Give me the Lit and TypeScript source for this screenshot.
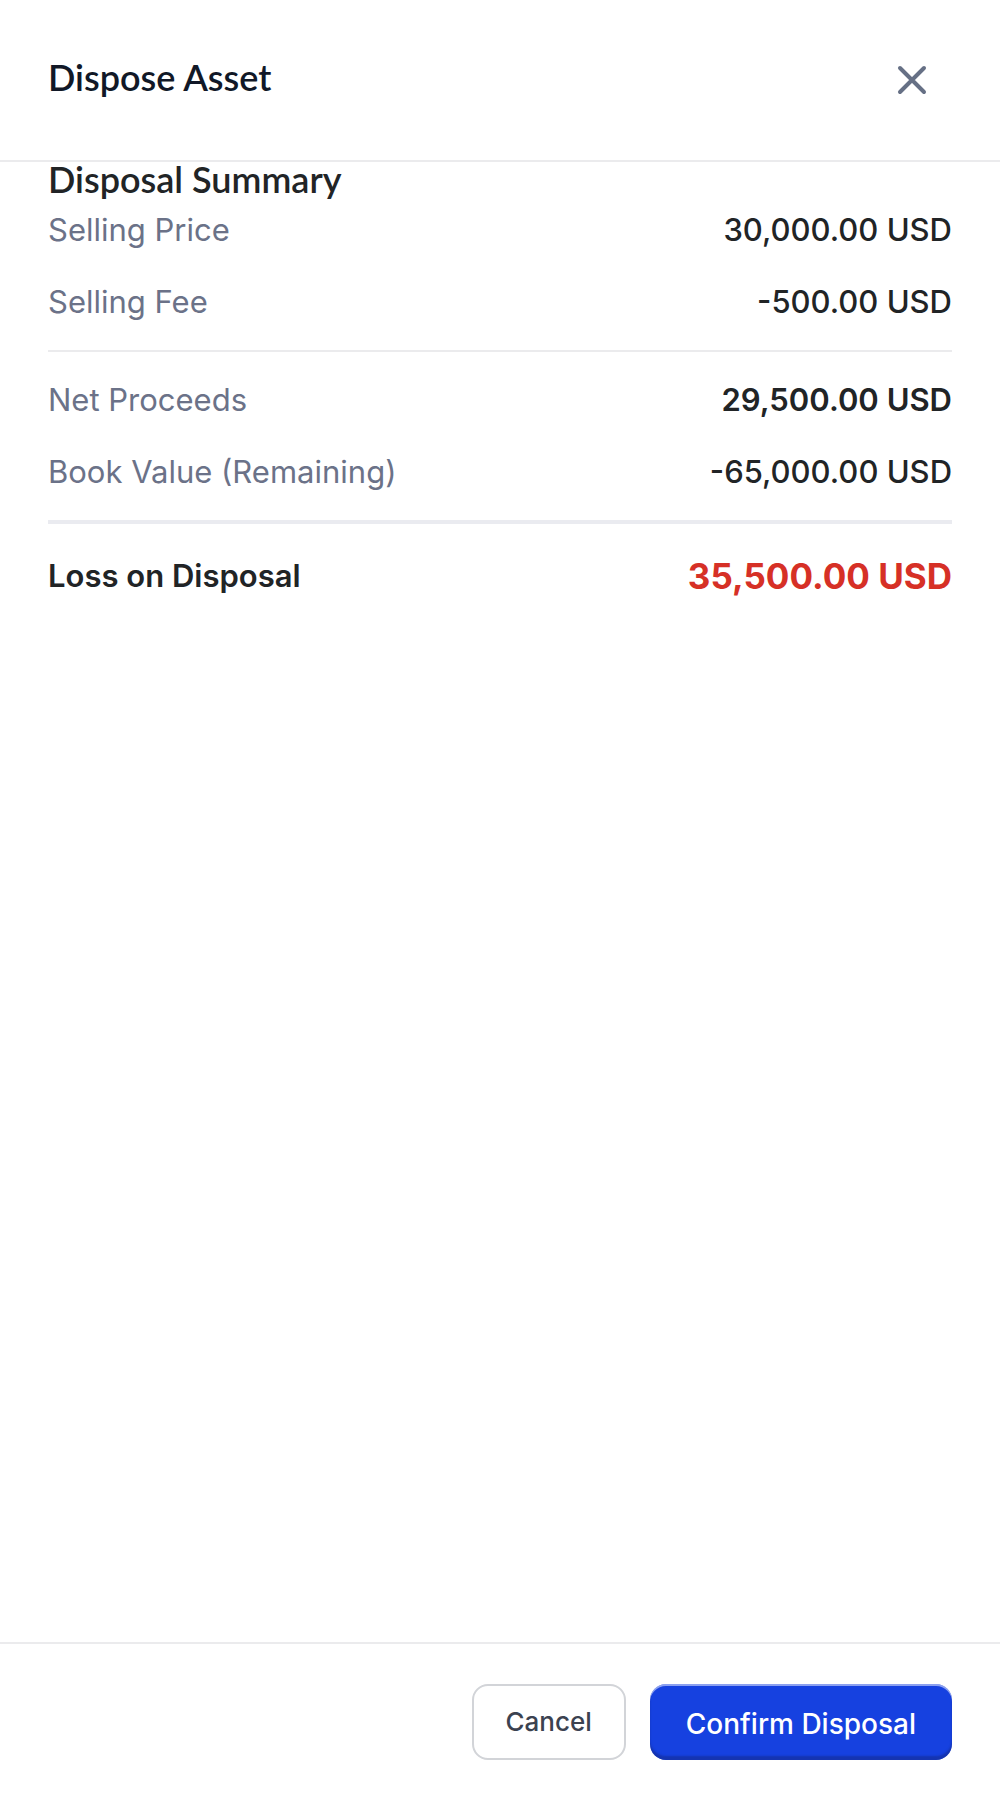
import { LitElement, html, css } from 'lit';
import { customElement, property } from 'lit/decorators.js';

@customElement('summary-row')
export class SummaryRow extends LitElement {
  @property({ type: String }) label = '';
  @property({ type: String }) amount = '';
  // '' | 'strong' | 'total'
  @property({ type: String }) variant = '';

  static styles = css`
    :host {
      display: block;
    }
    .row {
      display: flex;
      align-items: center;
      justify-content: space-between;
      gap: 16px;
      font-size: 31px;
      line-height: 48px;
    }
    .label {
      color: #6b7288;
    }
    .amount {
      font-weight: 500;
      color: #212426;
      white-space: nowrap;
    }
    .strong .amount {
      font-weight: 600;
    }
    .total {
      line-height: 56px;
    }
    .total .label {
      font-weight: 600;
      color: #212426;
    }
    .total .amount {
      font-size: 35px;
      font-weight: 700;
      color: #d63026;
    }
  `;

  render() {
    return html`
      <div class="row ${this.variant}">
        <span class="label">${this.label}</span>
        <span class="amount">${this.amount}</span>
      </div>
    `;
  }
}

@customElement('app-root')
export class AppRoot extends LitElement {
  static styles = css`
    :host {
      display: flex;
      flex-direction: column;
      min-height: 100vh;
      background: #ffffff;
      font-family: Inter, 'Liberation Sans', sans-serif;
    }
    .header {
      display: flex;
      align-items: flex-start;
      justify-content: space-between;
      padding: 48px;
      border-bottom: 2px solid #ebebed;
    }
    h1,
    h2 {
      margin: 0;
      font-family: Lato, sans-serif;
      font-size: 36px;
      font-weight: 600;
      line-height: 58px;
      color: #111827;
    }
    h2 {
      margin-bottom: 10px;
      line-height: 34px;
      color: #212426;
    }
    .close {
      display: flex;
      padding: 16px 24px;
      border: 0;
      background: none;
      color: #667085;
      cursor: pointer;
    }
    .content {
      flex: 1;
      padding: 0 48px;
    }
    .group {
      display: flex;
      flex-direction: column;
      gap: 24px;
    }
    .divider {
      margin: 24px 0;
      border: 0;
      border-top: 2px solid #ebebed;
    }
    .divider.thick {
      border-top: 4px solid #eaebf0;
    }
    .footer {
      display: flex;
      justify-content: flex-end;
      gap: 24px;
      padding: 40px 48px;
      border-top: 2px solid #ebebed;
    }
    .btn {
      padding: 0 32px;
      border: 2px solid #d2d4d8;
      border-radius: 16px;
      background: #ffffff;
      color: #3b4250;
      font-family: inherit;
      font-size: 26px;
      font-weight: 500;
      line-height: 72px;
      cursor: pointer;
    }
    .btn.primary {
      padding: 4px 36px 0;
      border: 0;
      background: #1641e0;
      /* light top edge, darker bottom edge */
      box-shadow:
        inset 0 2px 0 rgba(255, 255, 255, 0.5),
        inset 0 -4px 2px rgba(20, 40, 130, 0.5);
      color: #ffffff;
      font-size: 28px;
    }
  `;

  render() {
    return html`
      <header class="header">
        <h1>Dispose Asset</h1>
        <button class="close" type="button" aria-label="Close">
          <svg width="32" height="32" viewBox="0 0 32 32" fill="none" stroke="currentColor" stroke-width="4" stroke-linecap="round">
            <path d="M4 4l24 24M28 4L4 28" />
          </svg>
        </button>
      </header>
      <main class="content">
        <h2>Disposal Summary</h2>
        <div class="group">
          <summary-row label="Selling Price" amount="30,000.00 USD"></summary-row>
          <summary-row label="Selling Fee" amount="-500.00 USD"></summary-row>
        </div>
        <hr class="divider" />
        <div class="group">
          <summary-row label="Net Proceeds" amount="29,500.00 USD" variant="strong"></summary-row>
          <summary-row label="Book Value (Remaining)" amount="-65,000.00 USD"></summary-row>
        </div>
        <hr class="divider thick" />
        <summary-row label="Loss on Disposal" amount="35,500.00 USD" variant="total"></summary-row>
      </main>
      <footer class="footer">
        <button class="btn" type="button">Cancel</button>
        <button class="btn primary" type="button">Confirm Disposal</button>
      </footer>
    `;
  }
}
